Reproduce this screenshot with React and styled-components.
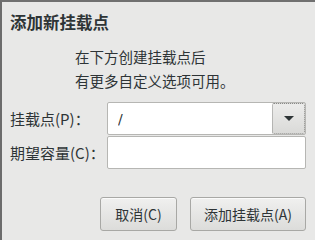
import styled, { createGlobalStyle } from 'styled-components';

const GlobalStyle = createGlobalStyle`
  html, body {
    margin: 0;
    padding: 0;
    background: #e8e8e7;
  }
  body {
    font-family: "Noto Sans CJK SC", "Noto Sans", sans-serif;
    color: #2e3436;
  }
`;

const Window = styled.div`
  width: 315px;
  height: 240px;
  box-sizing: border-box;
  border-top: 2px solid #707070;
  border-left: 2px solid #6c6c6c;
  background: #e8e8e7;
  display: flex;
  flex-direction: column;
  padding: 0 9px 0 8px;
`;

const Title = styled.h1`
  margin: 9px 0 0;
  font-size: 16.5px;
  font-weight: bold;
  line-height: 22px;
  color: #2e3436;
`;

const Description = styled.p`
  margin: 12px 0 0 65px;
  font-size: 14.5px;
  line-height: 24px;
  color: #2e3436;
`;

const Form = styled.div`
  margin-top: 9px;
  display: grid;
  grid-template-columns: 97px minmax(0, 1fr);
  row-gap: 1px;
  align-items: center;
`;

const Label = styled.label`
  font-size: 15px;
  color: #2e3436;
`;

const Field = styled.div`
  display: flex;
  height: 33px;
  box-sizing: border-box;
  background: #fff;
  border: 1px solid #b6b6b3;
  border-radius: 2px;
`;

const TextInput = styled.input`
  flex: 1;
  width: 0;
  min-width: 0;
  border: none;
  background: transparent;
  padding: 0 10px;
  font-size: 14px;
  font-family: "DejaVu Sans", sans-serif;
  color: #2e3436;
  &:focus {
    outline: none;
  }
`;

const DropButton = styled.button`
  flex: none;
  width: 33px;
  margin: 0;
  padding: 0;
  border: 1px dotted #8a8a88;
  border-radius: 2px;
  background: linear-gradient(#ececeb, #dadad8);
  display: flex;
  align-items: center;
  justify-content: center;
`;

const Arrow = styled.span`
  width: 0;
  height: 0;
  border-left: 5px solid transparent;
  border-right: 5px solid transparent;
  border-top: 5px solid #2e3436;
`;

const ButtonRow = styled.div`
  margin-top: 28px;
  display: flex;
  justify-content: flex-end;
  gap: 13px;
`;

const Button = styled.button`
  width: ${(p) => p.$w}px;
  height: 34px;
  box-sizing: border-box;
  border: 1px solid #a8a8a5;
  border-radius: 3px;
  background: linear-gradient(#f0f0ef, #dcdcda);
  box-shadow: inset 0 1px 0 #fafafa;
  font-family: "Noto Sans CJK SC", "Noto Sans", sans-serif;
  font-size: 14px;
  color: #2e3436;
  padding: 0;
`;

export default function App() {
  return (
    <>
      <GlobalStyle />
      <Window>
        <Title>添加新挂载点</Title>
        <Description>
          在下方创建挂载点后
          <br />
          有更多自定义选项可用。
        </Description>
        <Form>
          <Label>挂载点(P)：</Label>
          <Field>
            <TextInput defaultValue="/" />
            <DropButton>
              <Arrow />
            </DropButton>
          </Field>
          <Label>期望容量(C)：</Label>
          <Field>
            <TextInput defaultValue="" />
          </Field>
        </Form>
        <ButtonRow>
          <Button $w={77}>取消(C)</Button>
          <Button $w={116}>添加挂载点(A)</Button>
        </ButtonRow>
      </Window>
    </>
  );
}
